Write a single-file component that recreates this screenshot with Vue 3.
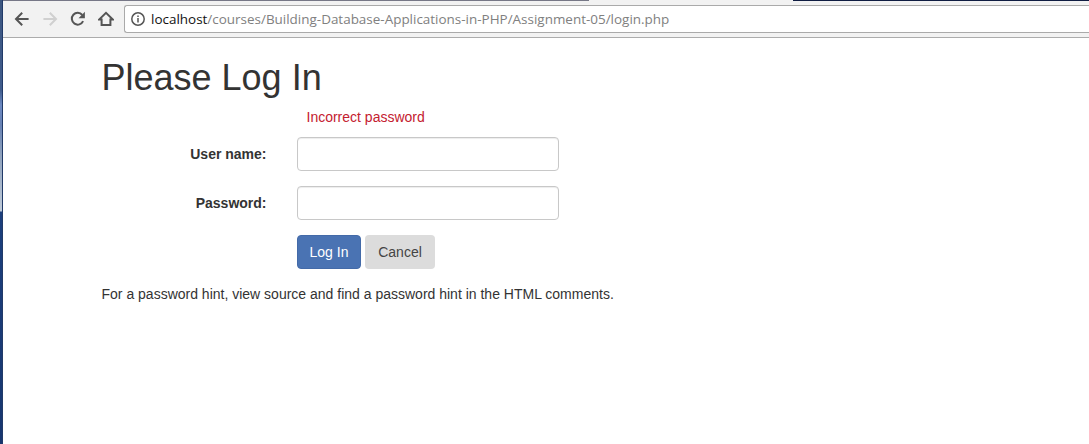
<script setup>
import { ref } from 'vue'

const userName = ref('')
const password = ref('')
</script>

<template>
  <div class="screen">
    <div class="desktop-edge"></div>
    <div class="browser">
      <div class="tab-strip">
        <span class="frame"></span>
        <span class="tab"></span>
        <span class="wallpaper"></span>
      </div>
      <header class="toolbar">
        <svg class="nav" viewBox="0 0 16 16"><path d="M14.6 8H2.4M8.2 1.8 2 8l6.2 6.2" /></svg>
        <svg class="nav disabled" viewBox="0 0 16 16"><path d="M1.4 8h12.2M7.8 1.8 14 8l-6.2 6.2" /></svg>
        <svg class="nav" viewBox="0 0 16 16">
          <path d="M13.1 10.2A5.9 5.9 0 1 1 12.3 4" />
          <path class="solid" d="M14.9 .8v6.4H8.5z" />
        </svg>
        <svg class="nav" viewBox="0 0 16 16"><path d="M1 8.6 8 1.8l7 6.8H12.400V14H3.600V8.600z" /></svg>
        <div class="address">
          <svg class="info" viewBox="0 0 14 14">
            <circle cx="7" cy="7" r="6.200" />
            <path d="M7 6v4.600M7 3.400v1.600" />
          </svg>
          <span class="url"><b>localhost</b>/courses/Building-Database-Applications-in-PHP/Assignment-05/login.php</span>
        </div>
      </header>
      <main class="page">
        <h1>Please Log In</h1>
        <p class="error">Incorrect password</p>
        <form @submit.prevent>
          <div class="row">
            <label for="name">User name:</label>
            <input id="name" v-model="userName" type="text" />
          </div>
          <div class="row">
            <label for="pass">Password:</label>
            <input id="pass" v-model="password" type="password" />
          </div>
          <div class="actions">
            <button class="primary" type="submit">Log In</button>
            <button type="button">Cancel</button>
          </div>
        </form>
        <p class="hint">For a password hint, view source and find a password hint in the HTML comments.</p>
      </main>
    </div>
  </div>
</template>

<style>
body {
  overflow: hidden;
}
</style>

<style scoped>
* {
  box-sizing: border-box;
}
.screen {
  display: flex;
  width: 1089px;
  height: 444px;
  overflow: hidden;
  background: #fff;
  color: #333;
  font: 14px/20px "Liberation Sans", Arial, sans-serif;
}
.desktop-edge {
  flex: none;
  width: 3px;
  border-right: 1px solid #213a68;
  background: linear-gradient(#3c5680 0, #405c8c 90px, #6c89c2 105px, #6882b4 125px, #8fa2bd 155px, #c0cbd9 211px, #1c3f7d 212px, #17366f 100%);
}
.browser {
  flex: 1;
  min-width: 0;
}
.tab-strip {
  display: flex;
  height: 1px;
}
.frame {
  width: 586px;
  background: #777887;
}
.tab {
  width: 204px;
  background: #f2f2f2;
}
.wallpaper {
  flex: 1;
  background: #101d42;
}
.toolbar {
  display: flex;
  align-items: center;
  height: 37px;
  padding: 0 0 0 11px;
  border-bottom: 1px solid #acacac;
  background: #f2f2f2;
}
.nav {
  flex: none;
  width: 16px;
  height: 16px;
  margin-right: 12px;
  fill: none;
  stroke: #555;
  stroke-width: 2;
}
.nav.disabled {
  stroke: #d0d0d0;
}
.nav .solid {
  fill: #555;
  stroke: none;
}
.address {
  display: flex;
  flex: 1;
  align-items: center;
  height: 28px;
  margin-left: -2px;
  padding-left: 6px;
  border: 1px solid #aaa;
  border-right: 0;
  border-radius: 3px 0 0 3px;
  background: #fff;
}
.info {
  flex: none;
  width: 14px;
  height: 14px;
  margin-right: 6px;
  fill: none;
  stroke: #555;
  stroke-width: 1.500;
}
.url {
  color: #808080;
  font: 13.460px/20px "Open Sans", "Noto Sans", sans-serif;
  white-space: nowrap;
}
.url b {
  color: #111;
  font-weight: 400;
}
.page {
  padding: 20px 0 0 98.500px;
}
h1 {
  margin: 0 0 10px;
  font-size: 36px;
  font-weight: 500;
  line-height: 39px;
}
p {
  margin: 0;
}
.error {
  margin: 0 0 10px 205px;
  color: #c4202f;
}
.row {
  display: flex;
  align-items: center;
  height: 34px;
  margin-bottom: 15px;
}
label {
  width: 165px;
  margin-right: 30.500px;
  font-weight: 700;
  text-align: right;
}
input {
  width: 262px;
  height: 34px;
  padding: 6px 12px;
  border: 1px solid #c8c8c8;
  border-radius: 4px;
  outline: 0;
  background: #fff;
  box-shadow: inset 0 1px 1px rgba(0, 0, 0, 0.075);
}
.actions {
  display: flex;
  gap: 4px;
  margin: 0 0 15px 195.500px;
}
button {
  width: 70px;
  height: 34px;
  padding: 0;
  border: 0;
  border-radius: 4px;
  background: #dcdcdc;
  color: #444;
  font: inherit;
}
.primary {
  width: 64px;
  border: 1px solid #436aa8;
  background: #4a73b3;
  color: #fff;
}
</style>
